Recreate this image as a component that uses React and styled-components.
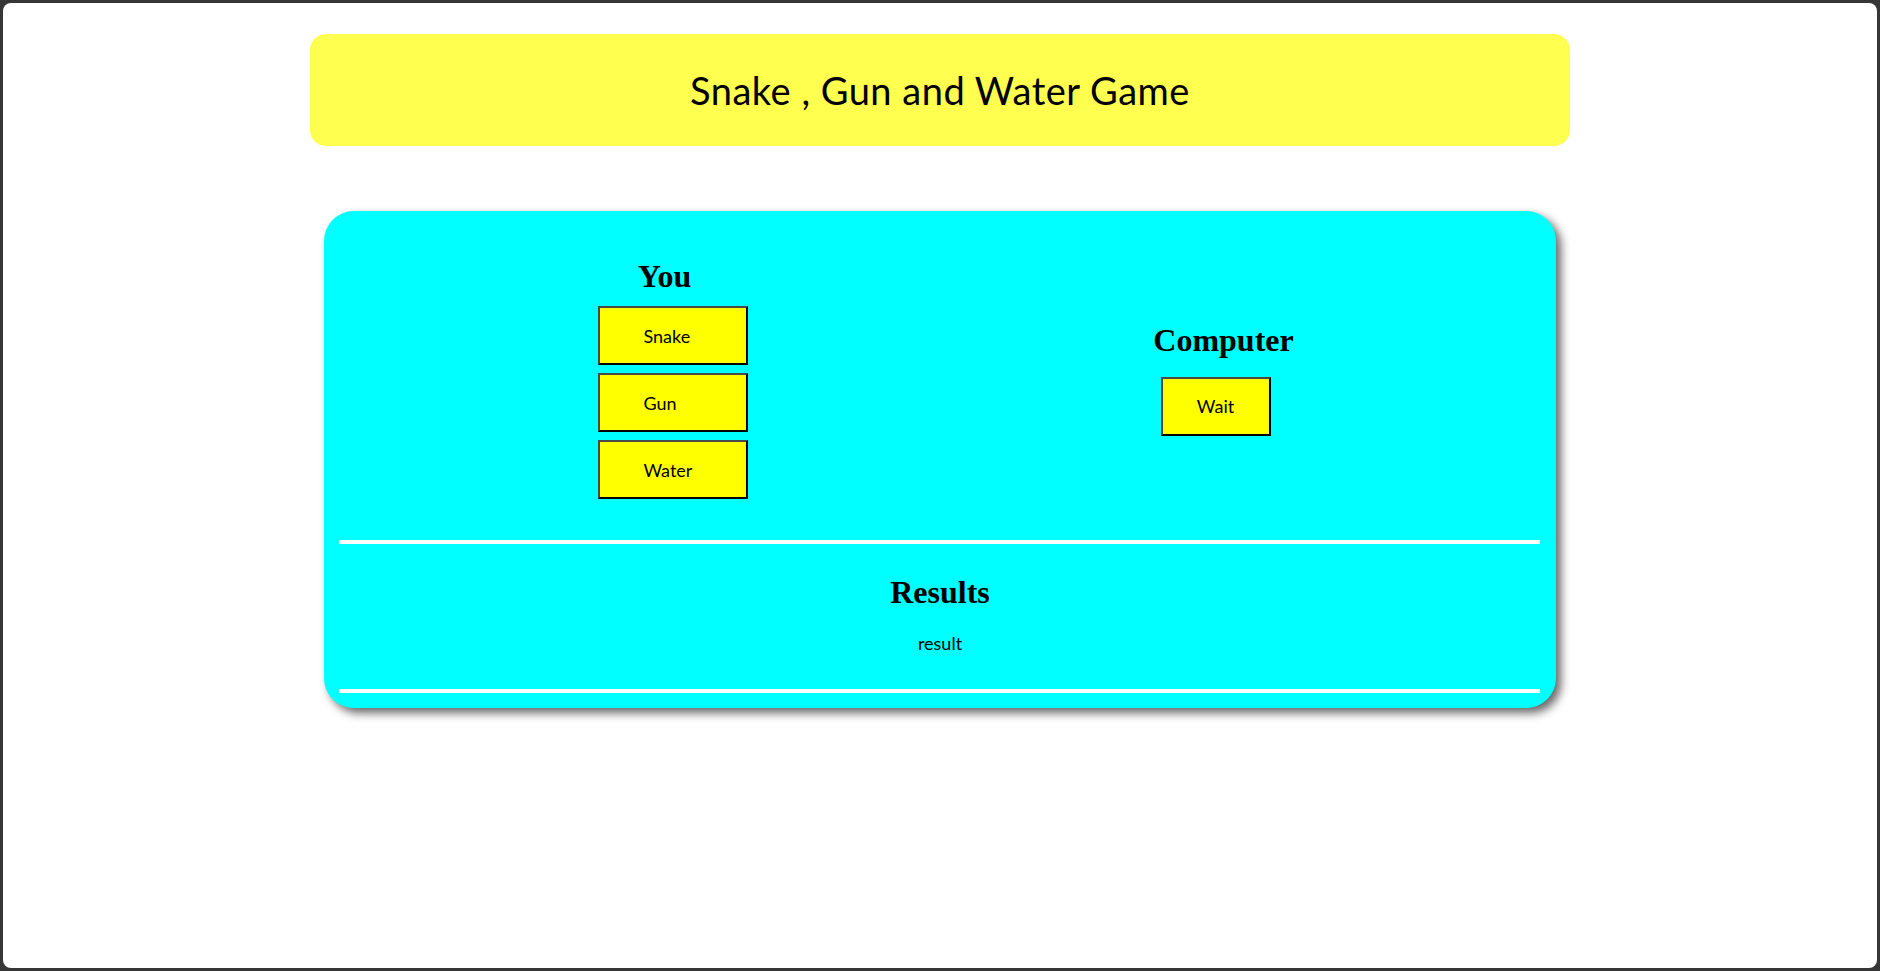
import React from 'react';
import styled, { createGlobalStyle } from 'styled-components';

const GlobalStyle = createGlobalStyle`
  html, body {
    margin: 0;
    height: 100%;
    background-color: #363636;
  }

  #root {
    height: 100%;
  }
`;

const Page = styled.div`
  box-sizing: border-box;
  height: calc(100% - 6px);
  margin: 3px;
  padding-top: 31px;
  background-color: white;
  border-radius: 8px;
  overflow: hidden;
`;

const Header = styled.header`
  align-items: center;
  background-color: #ffff50;
  border-radius: 16px;
  display: flex;
  height: 112px;
  justify-content: center;
  margin: 0 auto;
  width: 1260px;

  h1 {
    font-family: Lato, 'Open Sans', sans-serif;
    font-size: 38px;
    font-weight: normal;
    letter-spacing: 0.5px;
    margin: 0;
  }
`;

const Board = styled.main`
  background-color: #00ffff;
  border-radius: 30px;
  box-shadow: 5px 5px 10px rgba(0, 0, 0, 0.6);
  box-sizing: border-box;
  margin: 65px auto 0;
  padding-bottom: 15px;
  width: 1232px;
`;

const Players = styled.section`
  align-items: center;
  display: grid;
  grid-template-columns: 1fr 1fr;
  padding: 47px 65px 41px;
`;

const Player = styled.div`
  align-items: center;
  display: flex;
  flex-direction: column;
  gap: 8px;

  h2 {
    font-family: 'Liberation Serif', serif;
    font-size: 32px;
    font-weight: bold;
    margin: 0 0 ${props => props.headGap}px ${props => props.headShift}px;
  }

  button {
    margin-left: ${props => props.buttonShift}px;
  }
`;

const Choice = styled.button`
  background-color: #ffff00;
  border: 2px solid;
  border-color: #4a4a4a #000 #000 #4a4a4a;
  box-sizing: border-box;
  color: black;
  cursor: pointer;
  font-family: Lato, 'Open Sans', sans-serif;
  font-size: 18px;
  height: 59px;
  padding: 0 0 0 ${props => (props.wide ? '44px' : '0')};
  text-align: ${props => (props.wide ? 'left' : 'center')};
  width: ${props => (props.wide ? '150px' : '110px')};
`;

const Divider = styled.hr`
  background-color: white;
  border: 0;
  height: 4px;
  margin: 0 16px 0 15px;
`;

const Results = styled.section`
  padding: 30px 0 35px;
  text-align: center;

  h2 {
    font-family: 'Liberation Serif', serif;
    font-size: 32px;
    font-weight: bold;
    margin: 0 0 21px;
  }

  p {
    font-family: Lato, 'Open Sans', sans-serif;
    font-size: 18px;
    margin: 0;
  }
`;

const choices = ['Snake', 'Gun', 'Water'];

export default function App() {
  return (
    <>
      <GlobalStyle />
      <Page>
        <Header>
          <h1>Snake , Gun and Water Game</h1>
        </Header>
        <Board>
          <Players>
            <Player headGap={3} headShift={0} buttonShift={16}>
              <h2>You</h2>
              {choices.map(choice => (
                <Choice wide key={choice}>{choice}</Choice>
              ))}
            </Player>
            <Player headGap={10} headShift={16} buttonShift={0}>
              <h2>Computer</h2>
              <Choice>Wait</Choice>
            </Player>
          </Players>
          <Divider />
          <Results>
            <h2>Results</h2>
            <p>result</p>
          </Results>
          <Divider />
        </Board>
      </Page>
    </>
  );
}
